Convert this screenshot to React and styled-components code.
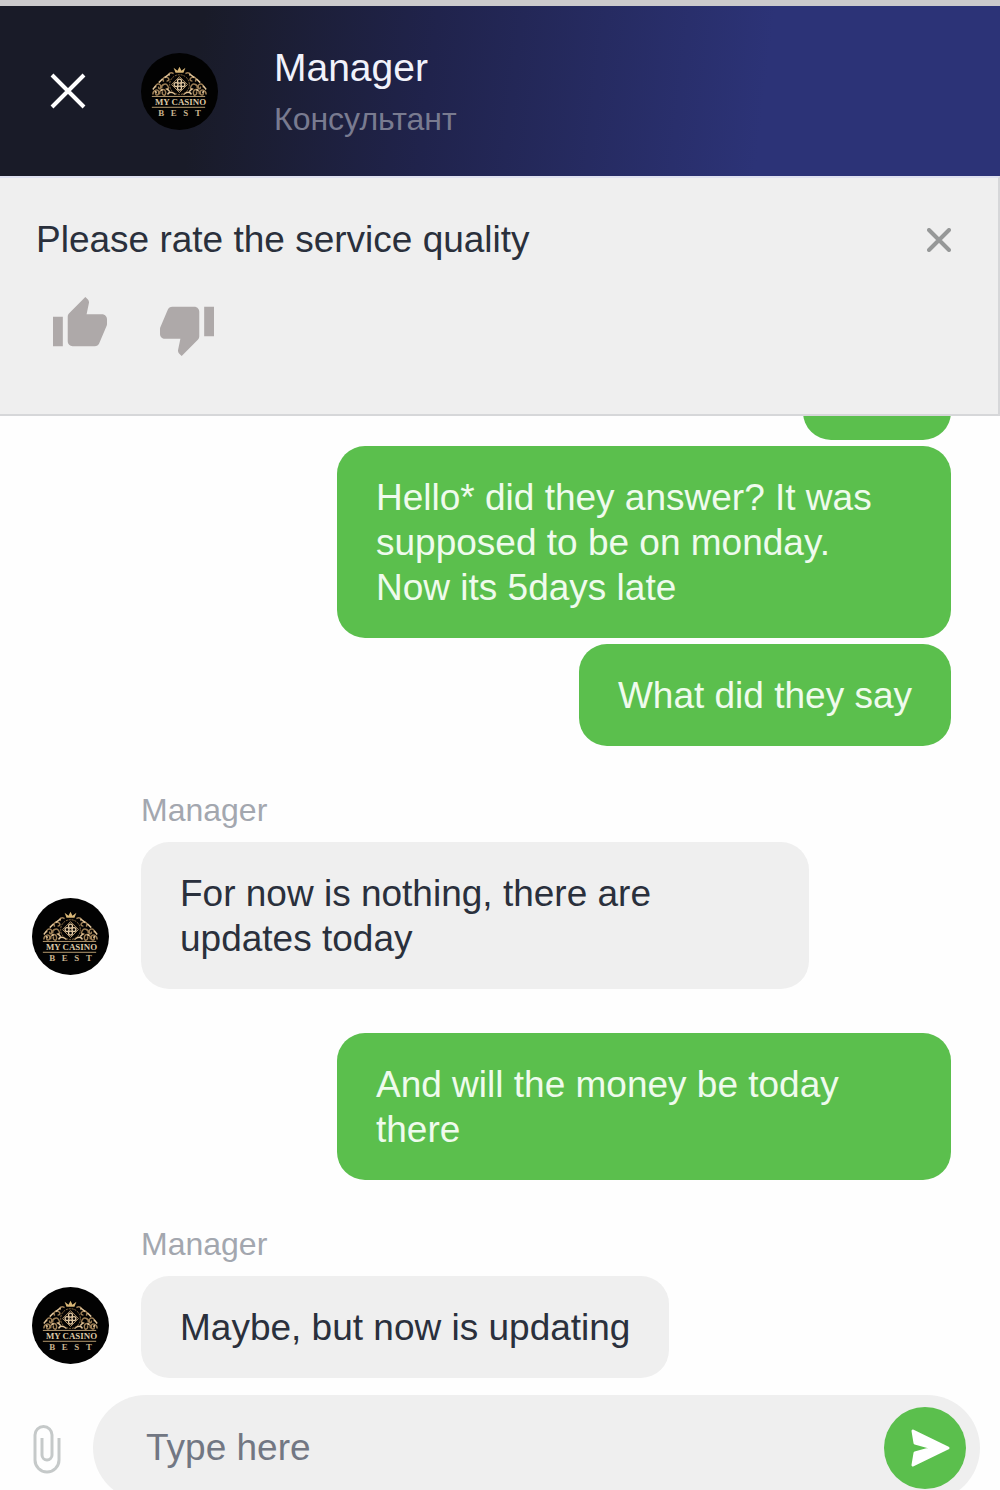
import React from 'react'
import styled, { createGlobalStyle } from 'styled-components'

const GlobalStyle = createGlobalStyle`
* {
  box-sizing: border-box;
}
body {
  margin: 0;
  background: #fefefe;
  font-family: "Liberation Sans", Arial, sans-serif;
}
button {
  border: none;
  padding: 0;
  background: none;
  cursor: pointer;
}
svg {
  display: block;
}
`

const ChatPage = styled.div`
display: flex;
flex-direction: column;
height: 100vh;
overflow: hidden;
border-top: 6px solid #cbcacc;
`

const Header = styled.header`
display: flex;
align-items: center;
flex-shrink: 0;
height: 170px;
padding: 0 48px;
background: linear-gradient(97deg, #191b28 20%, #20234c 43%, #2c3377 76%);
`

const CloseChat = styled.button`
width: 40px;
margin-right: 53px;
`

const HeaderNames = styled.div`
margin-left: 56px;
padding-top: 2px;
`

const Name = styled.h1`
margin: 0;
font-size: 39px;
font-weight: normal;
line-height: 54px;
color: #f1f2fb;
`

const Role = styled.p`
margin: 0;
font-size: 32px;
line-height: 48px;
color: #797b90;
`

const RatePanel = styled.section`
flex-shrink: 0;
padding: 39px 47px 58px 36px;
background: #efefef;
border: solid #d6d7d9;
border-width: 2px 2px 2px 0;
border-top-color: #dfe1f0;
`

const RateTop = styled.div`
display: flex;
align-items: center;
justify-content: space-between;
`

const RateTitle = styled.h2`
margin: 0;
font-size: 37px;
font-weight: normal;
line-height: 46px;
color: #2a303c;
`

const RateButtons = styled.div`
display: flex;
gap: 53px;
margin-top: 34px;
padding-left: 17px;
`

const RateIcon = styled.svg`
width: 54px;
height: 59px;
fill: #aea9a9;
transform: ${(props) => (props.$down ? 'rotate(180deg)' : 'none')};
`

const Messages = styled.main`
display: flex;
flex: 1;
flex-direction: column;
justify-content: flex-end;
gap: 44px;
min-height: 0;
padding: 0 49px 17px 32px;
overflow: hidden;
`

const MyGroup = styled.div`
display: flex;
flex-direction: column;
align-items: flex-end;
gap: 6px;
`

const ManagerGroup = styled.div`
display: flex;
align-items: flex-end;
gap: 32px;
`

const AvatarSlot = styled.div`
flex-shrink: 0;
padding-bottom: 14px;
`

const ManagerLabel = styled.div`
margin-bottom: 12px;
font-size: 32px;
line-height: 40px;
color: #a3a7af;
`

const Bubble = styled.p`
width: fit-content;
max-width: ${(props) => (props.$mine ? '614px' : '668px')};
min-width: 148px;
min-height: 102px;
margin: 0;
padding: 29px 39px 28px;
border-radius: 28px;
font-size: 37px;
line-height: 45px;
color: ${(props) => (props.$mine ? '#effbed' : '#2a303c')};
background: ${(props) => (props.$mine ? '#5bbf4d' : '#efefef')};
`

const Composer = styled.form`
display: flex;
align-items: flex-start;
flex-shrink: 0;
height: 95px;
padding: 0 20px 0 33px;
overflow: hidden;
`

const Attach = styled.button`
width: 28px;
height: 108px;
margin-right: 32px;
`

const InputPill = styled.div`
display: flex;
align-items: center;
flex: 1;
height: 106px;
padding: 0 14px 0 53px;
border-radius: 53px;
background: #efefef;
`

const TextInput = styled.input`
flex: 1;
min-width: 0;
height: 60px;
padding: 0;
border: none;
outline: none;
background: none;
font-family: inherit;
font-size: 37px;
color: #2a303c;
&::placeholder {
  color: #727783;
  opacity: 1;
}
`

const Send = styled.button`
width: 82px;
height: 82px;
border-radius: 50%;
background: #5bbf4d;
`

const AvatarSvg = styled.svg`
flex-shrink: 0;
width: 77px;
height: 77px;
font-family: "Liberation Serif", serif;
font-weight: bold;
`

// one side of the crest, the other one is mirrored
const Scroll = () => (
  <g fill="none" stroke="#9c7e55" strokeWidth="1.5">
    <path d="M12 42c0-5 6-6 6-2s-4 3-3 0M19 42c-1-5 6-7 6-2s-5 2-3-1" />
    <path d="M15 35c-1-4 5-5 5-1s-3 2-2 0M21 36c-1-4 4-6 6-3s0 5-2 3" />
    <path d="M23 29c-2-3 1-6 4-4s0 4-1 3M29 23c-2-2 1-4 4-2" />
    <path d="M27 42c1-3 5-3 8 0M29 39l-3-3" stroke="#e2c59a" />
    <path d="M12 37l3-4M18 30l4-4M24 25l5-4M14 39l2 1M20 38l2-1" stroke="#e2c59a" />
  </g>
)

const Avatar = () => (
  <AvatarSvg viewBox="0 0 78 78" role="img" aria-label="My Casino Best">
    <circle cx="39" cy="39" r="39" fill="#020202" />
    <Scroll />
    <g transform="matrix(-1 0 0 1 78 0)">
      <Scroll />
    </g>
    <path d="M35 20l-2-5 4 3 2-4 2 4 4-3-2 5z" fill="#d9b777" />
    <circle cx="39" cy="32" r="10" fill="#050403" stroke="#927246" strokeDasharray="2 1" />
    <path d="M39 24l8 8-8 8-8-8z" fill="none" stroke="#b4966b" />
    <g fill="none" stroke="#e6cca5" strokeWidth="1.3">
      <circle cx="39" cy="28.5" r="2" />
      <circle cx="39" cy="35.5" r="2" />
      <circle cx="35.5" cy="32" r="2" />
      <circle cx="42.5" cy="32" r="2" />
    </g>
    <path d="M11 44h54M11 55h54" stroke="#b79b70" />
    <text x="40" y="53" textAnchor="middle" fontSize="9" fill="#dcc8a5">MY CASINO</text>
    <text x="39" y="64" textAnchor="middle" fontSize="9" fill="#c9b38e">
      {'B\u00a0\u00a0\u00a0E\u00a0\u00a0\u00a0S\u00a0\u00a0\u00a0T'}
    </text>
  </AvatarSvg>
)

const thumb =
  'M1 21h4V9H1v12zm22-11c0-1.1-.9-2-2-2h-6.31l.95-4.57.03-.32c0-.41-.17-.79-.44-1.06L14.17 1 7.59 7.59C7.22 7.95 7 8.45 7 9v10c0 1.1.9 2 2 2h9c.83 0 1.54-.5 1.84-1.22l3.02-7.05c.09-.23.14-.47.14-.73v-2z'

const ManagerMessage = ({ children }) => (
  <ManagerGroup>
    <AvatarSlot>
      <Avatar />
    </AvatarSlot>
    <div>
      <ManagerLabel>Manager</ManagerLabel>
      <Bubble>{children}</Bubble>
    </div>
  </ManagerGroup>
)

export default function App() {
  return (
    <ChatPage>
      <GlobalStyle />

      <Header>
        <CloseChat type="button" aria-label="Close chat">
          <svg width="40" height="40" viewBox="0 0 40 40" stroke="#fff" strokeWidth="4">
            <path d="M4 4l32 32M36 4L4 36" />
          </svg>
        </CloseChat>
        <Avatar />
        <HeaderNames>
          <Name>Manager</Name>
          <Role>Консультант</Role>
        </HeaderNames>
      </Header>

      <RatePanel>
        <RateTop>
          <RateTitle>Please rate the service quality</RateTitle>
          <button type="button" aria-label="Close rating">
            <svg width="24" height="24" viewBox="0 0 24 24" stroke="#969898" strokeWidth="4" strokeLinecap="round">
              <path d="M2 2l20 20M22 2L2 22" />
            </svg>
          </button>
        </RateTop>
        <RateButtons>
          <button type="button" aria-label="Good">
            <RateIcon viewBox="1 1 22 24" preserveAspectRatio="none">
              <path d={thumb} />
            </RateIcon>
          </button>
          <button type="button" aria-label="Bad">
            <RateIcon $down viewBox="1 1 22 24" preserveAspectRatio="none">
              <path d={thumb} />
            </RateIcon>
          </button>
        </RateButtons>
      </RatePanel>

      <Messages>
        <MyGroup>
          <Bubble $mine />
          <Bubble $mine>Hello* did they answer? It was supposed to be on monday. Now its 5days late</Bubble>
          <Bubble $mine>What did they say</Bubble>
        </MyGroup>
        <ManagerMessage>For now is nothing, there are updates today</ManagerMessage>
        <MyGroup>
          <Bubble $mine>And will the money be today there</Bubble>
        </MyGroup>
        <ManagerMessage>Maybe, but now is updating</ManagerMessage>
      </Messages>

      <Composer>
        <Attach type="button" aria-label="Attach file">
          <svg width="28" height="50" viewBox="0 0 28 50" fill="none" stroke="#c5c9c9" strokeWidth="3">
            <path d="M26 14v22a12 12 0 0 1-24 0V11a8.500 8.500 0 0 1 17 0v20a5 5 0 0 1-10 0V14" />
          </svg>
        </Attach>
        <InputPill>
          <TextInput type="text" placeholder="Type here" aria-label="Message" />
          <Send type="submit" aria-label="Send">
            <svg width="82" height="82" viewBox="0 0 82 82" fill="#fff" stroke="#fff" strokeWidth="3" strokeLinejoin="round">
              <path d="M29 24L64 41 29 58l2-12 18-5-18-5z" />
            </svg>
          </Send>
        </InputPill>
      </Composer>
    </ChatPage>
  )
}
